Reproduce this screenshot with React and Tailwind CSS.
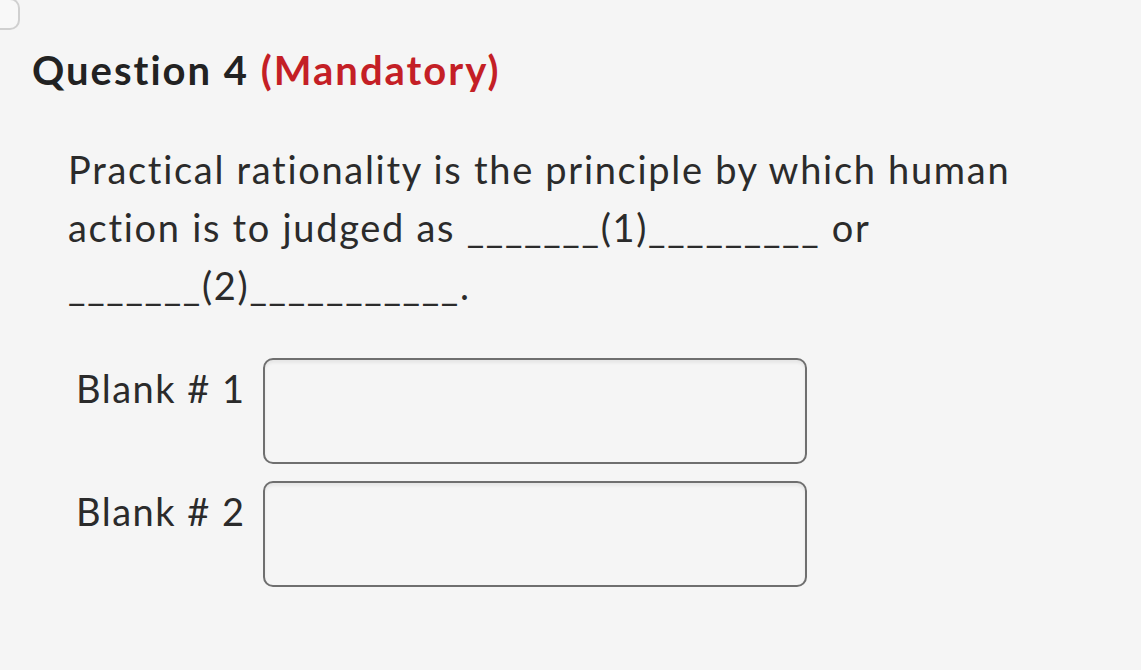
import React from 'react';

const lato = { fontFamily: 'Lato, "Noto Sans", sans-serif' };

function Blank({ label }) {
  return (
    <div className="flex items-start">
      <div className="w-[263px] shrink-0 pl-[76px] pt-[5px] whitespace-nowrap text-[38px] leading-[50px] tracking-[1.5px] text-[#2b2b2b]">
        {label}
      </div>
      <div className="w-[544px] h-[106px] rounded-[10px] border-2 border-[#6f6f6f] bg-[#f5f5f5] shadow-[inset_0_3px_3px_rgba(0,0,0,0.06)]" />
    </div>
  );
}

export default function App() {
  return (
    <div className="w-[1141px] h-[670px] bg-[#f5f5f5] overflow-hidden" style={lato}>
      <div className="h-0">
        <div className="w-[40px] h-[32px] -ml-[20px] -mt-[2px] rounded-[10px] border-2 border-[#d0d0d0] bg-[#f8f8f8]" />
      </div>
      <div className="pt-[44px] pl-[32px]">
        <h1 className="text-[40px] leading-[56px] font-bold tracking-[2px] text-[#222]">
          Question 4 <span className="text-[#c41f26]">(Mandatory)</span>
        </h1>
      </div>
      <div className="pl-[68px] pt-[42px] text-[38px] leading-[58px] tracking-[1.7px] text-[#2b2b2b] w-[1100px]">
        <p>Practical rationality is the principle by which human</p>
        <p>action is to judged as _______(1)_________ or</p>
        <p>_______(2)___________.</p>
      </div>
      <div className="pt-[44px] flex flex-col gap-[17px]">
        <Blank label="Blank # 1" />
        <Blank label="Blank # 2" />
      </div>
    </div>
  );
}
